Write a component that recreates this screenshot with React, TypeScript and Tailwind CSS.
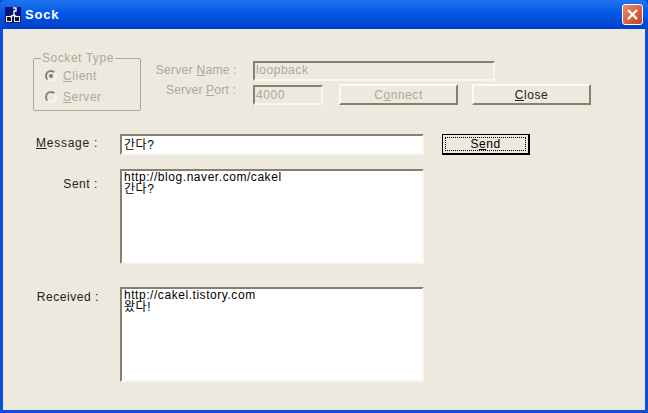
const font = "font-['Liberation_Sans','Noto_Sans_CJK_KR',sans-serif]";
const sunken = "border-2 border-t-[#85816f] border-l-[#85816f] border-r-[#f7f5ee] border-b-[#f7f5ee]";
const raised = "border-2 border-t-[#fbfaf5] border-l-[#fbfaf5] border-r-[#85816f] border-b-[#85816f]";

const Radio = ({ checked, label, rest }: { checked?: boolean; label: string; rest: string }) => (
  <div className="flex h-[21px] items-center gap-[6px] text-[#aca899]">
    <span className="flex h-[12px] w-[12px] items-center justify-center rounded-full border-2 border-l-[#85816f] border-t-[#85816f] border-r-[#f7f5ee] border-b-[#f7f5ee] bg-[#ede9df]">
      {checked && <span className="h-[4px] w-[4px] rounded-full bg-[#85816f]" />}
    </span>
    <span>
      <span className="underline">{label}</span>
      {rest}
    </span>
  </div>
);

const Button = ({ label, rest, before = "" }: { label: string; rest: string; before?: string }) => (
  <div className={`flex h-[21px] w-[119px] items-center justify-center ${raised}`}>
    <span>
      {before}
      <span className="underline">{label}</span>
      {rest}
    </span>
  </div>
);

const Memo = ({ lines }: { lines: string[] }) => (
  <div className={`h-[95px] w-[304px] overflow-hidden bg-white pl-[2px] text-black ${sunken}`}>
    {lines.map((line) => (
      <div key={line} className="h-[12px] leading-[12px]">
        {line}
      </div>
    ))}
  </div>
);

const App = () => (
  <div className={`flex h-[413px] w-[648px] flex-col overflow-hidden bg-[#0a50dc] text-[12px] tracking-[0.55px] ${font}`}>
    <div className="flex h-[29px] shrink-0 items-center justify-between rounded-t-[6px] bg-gradient-to-b from-[#1f74f0] via-[#0055e5] to-[#0040c8] pl-[5px] pr-[5px]">
      <div className="flex items-center gap-[4px]">
        <svg width="16" height="16" viewBox="0 0 16 16">
          <rect width="16" height="16" fill="#10107a" />
          <rect x="1" y="9" width="6" height="6" fill="#f4f4f4" />
          <rect x="9" y="9" width="6" height="6" fill="#e8e8e8" />
          <rect x="2" y="10" width="4" height="4" fill="#111" />
          <rect x="10" y="10" width="4" height="4" fill="#111" />
          <path d="M8 1 L11 1 L11 4 L9 4 L9 8 L5 10 M9 8 L12 10" stroke="#dff" strokeWidth="1.4" fill="none" />
        </svg>
        <span className="pt-[1px] text-[13px] font-bold tracking-[0.8px] text-white">Sock</span>
      </div>
      <div className="flex h-[21px] w-[21px] items-center justify-center rounded-[3px] border border-white bg-gradient-to-br from-[#e88a6c] to-[#c8401c]">
        <svg width="13" height="13" viewBox="0 0 13 13">
          <path d="M2 2 L11 11 M11 2 L2 11" stroke="#fff" strokeWidth="2.4" />
        </svg>
      </div>
    </div>

    <div className="mx-[3px] mb-[3px] flex h-[381px] flex-col bg-[#ede9df] pl-[30px] text-[#222]">
      <div className="mt-[23px] flex items-start text-[#aca899]">
        <fieldset className="h-[59px] w-[108px] rounded-[2px] border border-[#aca899] px-[11px] pt-0">
          <legend className="-ml-[4px] px-[1px] leading-[12px]">Socket Type</legend>
          <div className="mt-[1px]">
            <Radio checked label="C" rest="lient" />
            <Radio label="S" rest="erver" />
          </div>
        </fieldset>

        <div className="ml-[14px] mt-[8px] flex w-[82px] flex-col items-end">
          <div className="h-[20px] whitespace-nowrap leading-[20px] tracking-[0.3px]">
            Server <span className="underline">N</span>ame :
          </div>
          <div className="h-[20px] whitespace-nowrap pr-[1px] leading-[20px] tracking-[0.2px]">
            Server <span className="underline">P</span>ort :
          </div>
        </div>

        <div className="ml-[16px] mt-[9px] flex flex-col gap-[4px]">
          <div className={`flex h-[20px] w-[242px] items-center pb-[2px] pl-[1px] ${sunken}`}>loopback</div>
          <div className="flex items-start">
            <div className={`flex h-[20px] w-[70px] items-center pl-[1px] ${sunken}`}>4000</div>
            <div className="-mt-[1px] ml-[16px] flex gap-[14px]">
              <Button before="C" label="o" rest="nnect" />
              <div className="text-[#222]">
                <Button label="C" rest="lose" />
              </div>
            </div>
          </div>
        </div>
      </div>

      <div className="mt-[23px] flex items-start">
        <div className="h-[18px] w-[87px] pl-[3px] leading-[18px] tracking-[0.75px]">
          <span className="underline">M</span>essage :
        </div>
        <div className={`flex h-[21px] w-[304px] items-center overflow-hidden bg-white pl-[2px] text-black ${sunken}`}>
          간다?
        </div>
        <div className="ml-[18px] flex h-[21px] w-[88px] items-center justify-center border border-r-2 border-b-2 border-black bg-[#ede9df] p-[2px]">
          <div className="flex h-full w-full items-center justify-center border border-dotted border-black text-black">
            <span>
              S<span className="underline">e</span>nd
            </span>
          </div>
        </div>
      </div>

      <div className="mt-[14px] flex items-start">
        <div className="flex h-[30px] w-[65px] items-center justify-end">Sent :</div>
        <div className="ml-[22px]">
          <Memo lines={["http://blog.naver.com/cakel", "간다?"]} />
        </div>
      </div>

      <div className="mt-[23px] flex items-start">
        <div className="flex h-[20px] w-[66px] items-center justify-end whitespace-nowrap">Received :</div>
        <div className="ml-[21px]">
          <Memo lines={["http://cakel.tistory.com", "왔다!"]} />
        </div>
      </div>
    </div>
  </div>
);

export default App;
